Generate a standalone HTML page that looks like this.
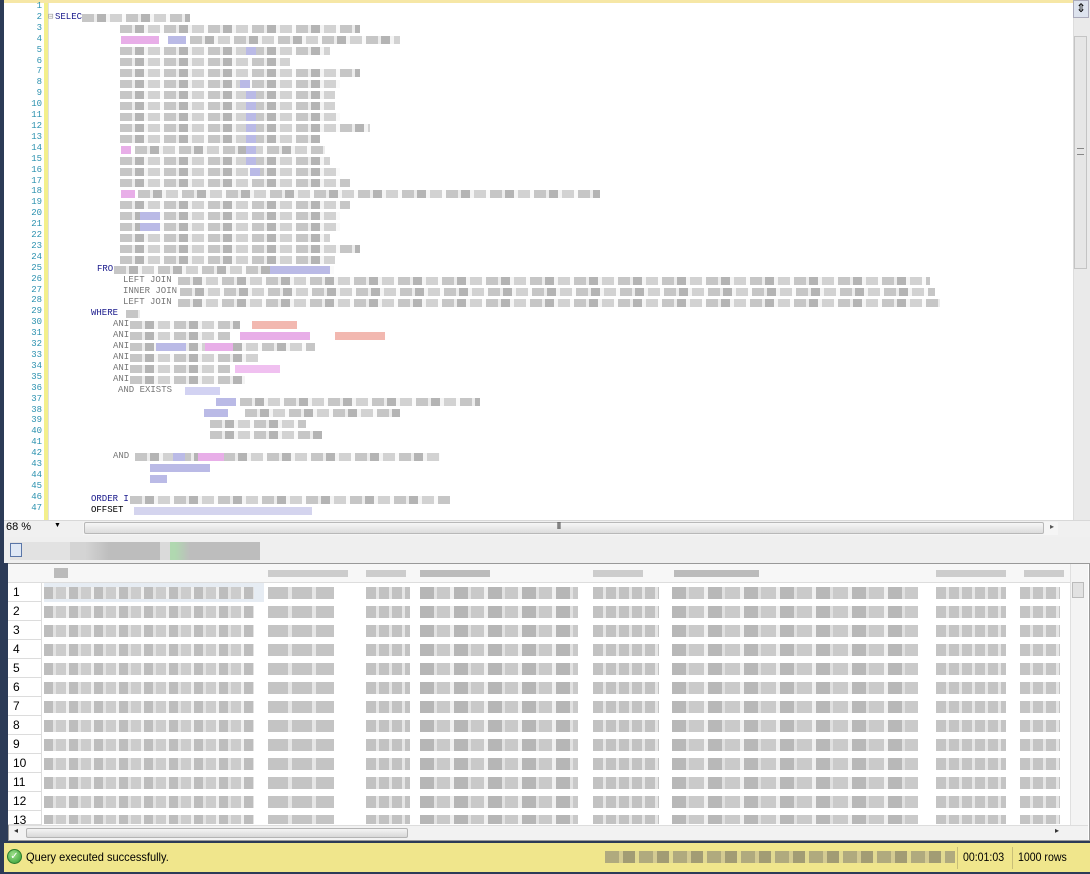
<!DOCTYPE html>
<html><head><meta charset="utf-8"><style>
*{margin:0;padding:0;box-sizing:border-box}
body{width:1090px;height:874px;overflow:hidden;background:#2c3b57;font-family:"Liberation Sans",sans-serif;position:relative}
.a{position:absolute}
#ed{left:4px;top:0;width:1086px;height:520px;background:#fff}
.ln{position:absolute;left:4px;width:38px;text-align:right;font:9px/10.9px "Liberation Mono",monospace;color:#2b91af}
.k{position:absolute;font:9px/11px "Liberation Mono",monospace;color:#1a1a8c}
.g{position:absolute;height:8px;background:repeating-linear-gradient(90deg,#c6c6c6 0 12px,#ececec 12px 15px,#b4b4b4 15px 24px,#f4f4f4 24px 28px,#d2d2d2 28px 40px,#fafafa 40px 44px)}
.b{position:absolute;height:8px;background:#babae6}
.p{position:absolute;height:8px;background:#e8aee8}
.r{position:absolute;left:44px;width:1026px;height:12px;background:
repeating-linear-gradient(90deg,#bdbdbd 0 9px,#e2e2e2 9px 12px,#cccccc 12px 22px,#f0f0f0 22px 25px) 0 0/210px 100% no-repeat,
repeating-linear-gradient(90deg,#c4c4c4 0 20px,#e6e6e6 20px 24px) 224px 0/66px 100% no-repeat,
repeating-linear-gradient(90deg,#c2c2c2 0 10px,#e6e6e6 10px 13px) 322px 0/44px 100% no-repeat,
repeating-linear-gradient(90deg,#b6b6b6 0 14px,#e2e2e2 14px 17px,#c9c9c9 17px 30px,#f0f0f0 30px 34px) 376px 0/158px 100% no-repeat,
repeating-linear-gradient(90deg,#c2c2c2 0 10px,#e6e6e6 10px 13px) 549px 0/66px 100% no-repeat,
repeating-linear-gradient(90deg,#b8b8b8 0 14px,#e0e0e0 14px 17px,#cacaca 17px 32px,#f0f0f0 32px 36px) 628px 0/246px 100% no-repeat,
repeating-linear-gradient(90deg,#c4c4c4 0 10px,#e6e6e6 10px 13px) 892px 0/70px 100% no-repeat,
repeating-linear-gradient(90deg,#c4c4c4 0 10px,#e6e6e6 10px 13px) 976px 0/40px 100% no-repeat}
.rn{position:absolute;left:8px;width:34px;height:19px;border-bottom:1px solid #dcdcdc;border-right:1px solid #dcdcdc;font-size:12px;line-height:19px;padding-left:5px;color:#000;background:#fff}
</style></head><body>
<div class="a" id="ed"></div>
<div class="a" style="left:4px;top:0;width:1069px;height:3px;background:#f6e7a6"></div>
<div class="a" style="left:44px;top:3px;width:4px;height:517px;background:#f3ef8c"></div>
<div class="a" style="left:48px;top:3px;width:1px;height:517px;background:#e0e0e0"></div>
<div class="ln" style="top:1px">1<br>2<br>3<br>4<br>5<br>6<br>7<br>8<br>9<br>10<br>11<br>12<br>13<br>14<br>15<br>16<br>17<br>18<br>19<br>20<br>21<br>22<br>23<br>24<br>25<br>26<br>27<br>28<br>29<br>30<br>31<br>32<br>33<br>34<br>35<br>36<br>37<br>38<br>39<br>40<br>41<br>42<br>43<br>44<br>45<br>46<br>47</div>
<div class="k" style="left:48px;top:12px;color:#999">⊟</div>
<div class="k" style="left:55px;top:12px">SELEC</div>
<div class="g" style="left:82px;top:14px;width:108px"></div>
<div class="g" style="left:120px;top:25px;width:240px"></div>
<div class="p" style="left:121px;top:36px;width:38px"></div><div class="b" style="left:168px;top:36px;width:18px"></div><div class="g" style="left:190px;top:36px;width:210px"></div>
<div class="g" style="left:120px;top:47px;width:210px"></div><div class="b" style="left:246px;top:47px;width:10px"></div>
<div class="g" style="left:120px;top:58px;width:170px"></div>
<div class="g" style="left:120px;top:69px;width:240px"></div>
<div class="g" style="left:120px;top:80px;width:220px"></div><div class="b" style="left:240px;top:80px;width:10px"></div>
<div class="g" style="left:120px;top:91px;width:215px"></div><div class="b" style="left:246px;top:91px;width:10px"></div>
<div class="g" style="left:120px;top:102px;width:215px"></div><div class="b" style="left:246px;top:102px;width:10px"></div>
<div class="g" style="left:120px;top:113px;width:220px"></div><div class="b" style="left:246px;top:113px;width:10px"></div>
<div class="g" style="left:120px;top:124px;width:250px"></div><div class="b" style="left:246px;top:124px;width:10px"></div>
<div class="g" style="left:120px;top:135px;width:200px"></div><div class="b" style="left:246px;top:135px;width:10px"></div>
<div class="p" style="left:121px;top:146px;width:10px"></div><div class="g" style="left:135px;top:146px;width:190px"></div><div class="b" style="left:246px;top:146px;width:10px"></div>
<div class="g" style="left:120px;top:157px;width:210px"></div><div class="b" style="left:246px;top:157px;width:10px"></div>
<div class="g" style="left:120px;top:168px;width:220px"></div><div class="b" style="left:250px;top:168px;width:10px"></div>
<div class="g" style="left:120px;top:179px;width:230px"></div>
<div class="p" style="left:121px;top:190px;width:14px"></div><div class="g" style="left:138px;top:190px;width:462px"></div>
<div class="g" style="left:120px;top:201px;width:230px"></div>
<div class="g" style="left:120px;top:212px;width:220px"></div><div class="b" style="left:140px;top:212px;width:20px"></div>
<div class="g" style="left:120px;top:223px;width:220px"></div><div class="b" style="left:140px;top:223px;width:20px"></div>
<div class="g" style="left:120px;top:234px;width:210px"></div>
<div class="g" style="left:120px;top:245px;width:240px"></div>
<div class="g" style="left:120px;top:256px;width:215px"></div>
<div class="k" style="left:97px;top:264px">FRO</div><div class="g" style="left:114px;top:266px;width:220px"></div><div class="b" style="left:270px;top:266px;width:60px"></div>
<div class="k" style="left:123px;top:275px;color:#777">LEFT JOIN</div><div class="g" style="left:178px;top:277px;width:752px"></div>
<div class="k" style="left:123px;top:286px;color:#777">INNER JOIN</div><div class="g" style="left:180px;top:288px;width:755px"></div>
<div class="k" style="left:123px;top:297px;color:#777">LEFT JOIN</div><div class="g" style="left:178px;top:299px;width:762px"></div>
<div class="k" style="left:91px;top:308px">WHERE</div><div class="g" style="left:126px;top:310px;width:14px"></div>
<div class="k" style="left:113px;top:319px;color:#777">ANI</div><div class="g" style="left:130px;top:321px;width:110px"></div><div class="p" style="left:252px;top:321px;width:45px;background:#f2b8b0"></div>
<div class="k" style="left:113px;top:330px;color:#777">ANI</div><div class="g" style="left:130px;top:332px;width:100px"></div><div class="p" style="left:240px;top:332px;width:70px"></div><div class="p" style="left:335px;top:332px;width:50px;background:#f2b8b0"></div>
<div class="k" style="left:113px;top:341px;color:#777">ANI</div><div class="g" style="left:130px;top:343px;width:185px"></div><div class="b" style="left:156px;top:343px;width:30px"></div><div class="p" style="left:205px;top:343px;width:28px"></div>
<div class="k" style="left:113px;top:352px;color:#777">ANI</div><div class="g" style="left:130px;top:354px;width:128px"></div>
<div class="k" style="left:113px;top:363px;color:#777">ANI</div><div class="g" style="left:130px;top:365px;width:100px"></div><div class="p" style="left:235px;top:365px;width:45px;background:#f0c0f0"></div>
<div class="k" style="left:113px;top:374px;color:#777">ANI</div><div class="g" style="left:130px;top:376px;width:115px"></div>
<div class="k" style="left:118px;top:385px;color:#777">AND EXISTS</div><div class="b" style="left:185px;top:387px;width:35px;background:#d2d2f2"></div>
<div class="b" style="left:216px;top:398px;width:20px"></div><div class="g" style="left:240px;top:398px;width:240px"></div>
<div class="b" style="left:204px;top:409px;width:24px"></div><div class="g" style="left:245px;top:409px;width:155px"></div>
<div class="g" style="left:210px;top:420px;width:96px"></div>
<div class="g" style="left:210px;top:431px;width:112px"></div>
<div class="k" style="left:113px;top:451px;color:#777">AND</div><div class="g" style="left:135px;top:453px;width:305px"></div><div class="b" style="left:173px;top:453px;width:12px"></div><div class="p" style="left:198px;top:453px;width:26px"></div>
<div class="b" style="left:150px;top:464px;width:60px"></div>
<div class="b" style="left:150px;top:475px;width:17px"></div>
<div class="k" style="left:91px;top:494px">ORDER I</div><div class="g" style="left:130px;top:496px;width:320px"></div>
<div class="k" style="left:91px;top:505px;color:#000">OFFSET</div><div class="g" style="left:134px;top:507px;width:178px;background:#d4d4ee"></div>
<div class="a" style="left:1073px;top:0;width:17px;height:520px;background:#eaeaea;border-left:1px solid #ddd"></div>
<div class="a" style="left:1073px;top:0;width:16px;height:18px;background:#dde3ee;border:1px solid #aab;font-size:12px;line-height:14px;text-align:center">⇕</div>
<div class="a" style="left:1074px;top:36px;width:13px;height:233px;background:#e6e6e6;border:1px solid #c4c4c4"></div>
<div class="a" style="left:1077px;top:148px;width:7px;height:7px;border-top:1px solid #888;border-bottom:1px solid #888"></div>
<div class="a" style="left:4px;top:520px;width:1086px;height:17px;background:#f0f0f0;border-top:1px solid #d8d8d8"></div>
<div class="a" style="left:6px;top:521px;font-size:11px;color:#000">68 %</div>
<div class="a" style="left:54px;top:522px;font-size:7px">▼</div>
<div class="a" style="left:83px;top:522px;width:975px;height:13px;background:#f5f5f5"></div>
<div class="a" style="left:84px;top:522px;width:960px;height:12px;background:linear-gradient(#f6f6f6,#dcdcdc);border:1px solid #b8b8b8;border-radius:2px"></div>
<div class="a" style="left:557px;top:521px;font-size:9px">⦀</div>
<div class="a" style="left:1050px;top:522px;font-size:8px;color:#555">▸</div>
<div class="a" style="left:4px;top:537px;width:1086px;height:26px;background:#efefef"></div>
<div class="a" style="left:10px;top:542px;width:250px;height:18px;background:linear-gradient(90deg,#e2e2e2 0 60px,#d4d4d4 60px 75px,#bdbdbd 100px 150px,#dadada 150px 160px,#b0d8b0 160px 165px,#bdbdbd 180px 255px)"></div>
<div class="a" style="left:10px;top:543px;width:12px;height:14px;border:1px solid #5a76a8;background:#dfe8f5"></div>
<div class="a" style="left:8px;top:563px;width:1082px;height:278px;background:#fff;border:1px solid #999"></div>
<div class="a" style="left:8px;top:564px;width:1062px;height:19px;background:#f7f7f7;border-bottom:1px solid #ddd"></div>
<div class="a" style="left:44px;top:568px;width:1020px;height:10px;background:
linear-gradient(#bbb,#bbb) 10px 0/14px 100% no-repeat,
linear-gradient(#ccc,#ccc) 224px 2px/80px 70% no-repeat,
linear-gradient(#ccc,#ccc) 322px 2px/40px 70% no-repeat,
linear-gradient(#bbb,#bbb) 376px 2px/70px 70% no-repeat,
linear-gradient(#ccc,#ccc) 549px 2px/50px 70% no-repeat,
linear-gradient(#bbb,#bbb) 630px 2px/85px 70% no-repeat,
linear-gradient(#ccc,#ccc) 892px 2px/70px 70% no-repeat,
linear-gradient(#ccc,#ccc) 980px 2px/40px 70% no-repeat"></div>
<div class="a" style="left:44px;top:583px;width:220px;height:19px;background:#e6ecf3"></div>
<div class="rn" style="top:583px">1</div><div class="r" style="top:587px"></div>
<div class="rn" style="top:602px">2</div><div class="r" style="top:606px"></div>
<div class="rn" style="top:621px">3</div><div class="r" style="top:625px"></div>
<div class="rn" style="top:640px">4</div><div class="r" style="top:644px"></div>
<div class="rn" style="top:659px">5</div><div class="r" style="top:663px"></div>
<div class="rn" style="top:678px">6</div><div class="r" style="top:682px"></div>
<div class="rn" style="top:697px">7</div><div class="r" style="top:701px"></div>
<div class="rn" style="top:716px">8</div><div class="r" style="top:720px"></div>
<div class="rn" style="top:735px">9</div><div class="r" style="top:739px"></div>
<div class="rn" style="top:754px">10</div><div class="r" style="top:758px"></div>
<div class="rn" style="top:773px">11</div><div class="r" style="top:777px"></div>
<div class="rn" style="top:792px">12</div><div class="r" style="top:796px"></div>
<div class="rn" style="top:811px;height:14px;overflow:hidden">13</div><div class="r" style="top:815px;height:9px"></div>
<div class="a" style="left:1070px;top:564px;width:18px;height:261px;background:#f4f4f4;border-left:1px solid #e0e0e0"></div>
<div class="a" style="left:1072px;top:582px;width:12px;height:16px;background:#e2e2e2;border:1px solid #bbb"></div>
<div class="a" style="left:9px;top:825px;width:1079px;height:15px;background:#f2f2f2;border-top:1px solid #ddd"></div>
<div class="a" style="left:14px;top:826px;font-size:8px;color:#333">◂</div>
<div class="a" style="left:26px;top:828px;width:382px;height:10px;background:linear-gradient(#f4f4f4,#d8d8d8);border:1px solid #b4b4b4;border-radius:2px"></div>
<div class="a" style="left:1055px;top:826px;font-size:8px;color:#333">▸</div>
<div class="a" style="left:4px;top:843px;width:1086px;height:29px;background:#f0e68c"></div>
<div class="a" style="left:7px;top:849px;width:15px;height:15px;border-radius:50%;background:radial-gradient(circle at 40% 35%,#9ee08a,#2f9a2f);border:1px solid #2a7a2a;color:#fff;font-size:10px;line-height:13px;text-align:center">✓</div>
<div class="a" style="left:26px;top:850px;font-size:12px;color:#000;transform:scaleX(0.92);transform-origin:left">Query executed successfully.</div>
<div class="a" style="left:605px;top:851px;width:350px;height:12px;background:repeating-linear-gradient(90deg,#b0aa7e 0 14px,#d4cb92 14px 18px,#a29c74 18px 30px,#e2da92 30px 34px)"></div>
<div class="a" style="left:957px;top:847px;width:1px;height:22px;background:#c8be78"></div>
<div class="a" style="left:963px;top:850px;font-size:12px;color:#000;transform:scaleX(0.88);transform-origin:left">00:01:03</div>
<div class="a" style="left:1012px;top:847px;width:1px;height:22px;background:#c8be78"></div>
<div class="a" style="left:1018px;top:850px;font-size:12px;color:#000;transform:scaleX(0.88);transform-origin:left">1000 rows</div>
</body></html>
